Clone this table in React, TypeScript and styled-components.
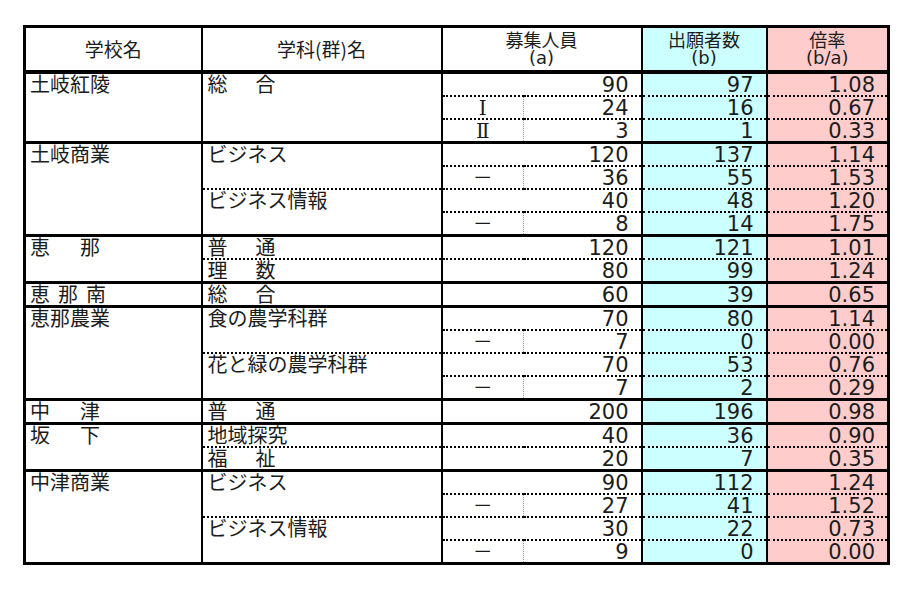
import React from 'react'
import styled, { createGlobalStyle } from 'styled-components'

const GlobalStyle = createGlobalStyle`
  body {
    margin: 0;
    background: #fff;
    font-family: "Noto Sans CJK JP", "Noto Sans", sans-serif;
    color: #1c1c1c;
  }
`

const Page = styled.div`
  padding: 25px 0 0 23px;
`

const Sheet = styled.table`
  border-collapse: collapse;
  table-layout: fixed;
  width: 864px;
  border: 3px solid #000;
`

const Col = styled.col<{ $w: number }>`
  width: ${(p) => p.$w}px;
`

const HeadCell = styled.th<{ $bg?: string }>`
  height: 42px;
  padding: 0;
  font-weight: normal;
  font-size: 19px;
  line-height: 20px;
  background: ${(p) => p.$bg || '#fff'};
  border: 2px solid #000;
  border-bottom: 4px solid #000;
  text-align: center;
  vertical-align: middle;
`

const HeadLine = styled.span`
  display: block;
  font-family: "DejaVu Sans", "Noto Sans CJK JP", sans-serif;
  font-size: 18px;
  line-height: 17px;
`

const Row = styled.tr<{ $first: boolean }>`
  td {
    border-top: ${(p) => (p.$first ? '3px solid #000' : 'none')};
  }
`

const SchoolCell = styled.td`
  padding: 0 0 0 4px;
  font-size: 20px;
  line-height: 20px;
  vertical-align: top;
  border-left: 2px solid #000;
  border-right: 2px solid #000;
`

const MajorCell = styled.td<{ $dotted: boolean }>`
  padding: 0 0 0 5px;
  font-size: 20px;
  line-height: 20px;
  vertical-align: top;
  border-right: 2px solid #000;
  border-bottom: ${(p) => (p.$dotted ? '2px dotted #000' : 'none')};
`

const LabelCell = styled.td<{ $mark: boolean }>`
  height: 21px;
  padding: 0;
  font-family: "DejaVu Serif", "Noto Sans CJK JP", serif;
  font-size: 20px;
  line-height: 20px;
  text-align: center;
  vertical-align: bottom;
  border-bottom: 2px dotted #000;
  border-right: ${(p) => (p.$mark ? '1px dotted #9a9a9a' : 'none')};
`

const NumCell = styled.td<{ $bg?: string }>`
  height: 21px;
  padding: 0 12px 0 0;
  font-family: "DejaVu Sans", "Noto Sans", sans-serif;
  font-size: 21px;
  line-height: 20px;
  text-align: right;
  vertical-align: bottom;
  background: ${(p) => p.$bg || '#fff'};
  border-bottom: 2px dotted #000;
  border-right: 2px solid #000;
`

const Spread = styled.span<{ $w: number }>`
  display: inline-flex;
  justify-content: space-between;
  width: ${(p) => p.$w}px;
`

type Line = { l?: string; a: number; b: number; r: string }
type Major = { name: string; spread?: number; rows: Line[] }
type School = { name: string; spread?: number; majors: Major[] }

const schools: School[] = [
  {
    name: '土岐紅陵',
    majors: [
      {
        name: '総合',
        spread: 68,
        rows: [
          { a: 90, b: 97, r: '1.08' },
          { l: 'Ⅰ', a: 24, b: 16, r: '0.67' },
          { l: 'Ⅱ', a: 3, b: 1, r: '0.33' },
        ],
      },
    ],
  },
  {
    name: '土岐商業',
    majors: [
      { name: 'ビジネス', rows: [{ a: 120, b: 137, r: '1.14' }, { l: '－', a: 36, b: 55, r: '1.53' }] },
      { name: 'ビジネス情報', rows: [{ a: 40, b: 48, r: '1.20' }, { l: '－', a: 8, b: 14, r: '1.75' }] },
    ],
  },
  {
    name: '恵那',
    spread: 70,
    majors: [
      { name: '普通', spread: 68, rows: [{ a: 120, b: 121, r: '1.01' }] },
      { name: '理数', spread: 68, rows: [{ a: 80, b: 99, r: '1.24' }] },
    ],
  },
  {
    name: '恵那南',
    spread: 76,
    majors: [{ name: '総合', spread: 68, rows: [{ a: 60, b: 39, r: '0.65' }] }],
  },
  {
    name: '恵那農業',
    majors: [
      { name: '食の農学科群', rows: [{ a: 70, b: 80, r: '1.14' }, { l: '－', a: 7, b: 0, r: '0.00' }] },
      { name: '花と緑の農学科群', rows: [{ a: 70, b: 53, r: '0.76' }, { l: '－', a: 7, b: 2, r: '0.29' }] },
    ],
  },
  {
    name: '中津',
    spread: 70,
    majors: [{ name: '普通', spread: 68, rows: [{ a: 200, b: 196, r: '0.98' }] }],
  },
  {
    name: '坂下',
    spread: 70,
    majors: [
      { name: '地域探究', rows: [{ a: 40, b: 36, r: '0.90' }] },
      { name: '福祉', spread: 68, rows: [{ a: 20, b: 7, r: '0.35' }] },
    ],
  },
  {
    name: '中津商業',
    majors: [
      { name: 'ビジネス', rows: [{ a: 90, b: 112, r: '1.24' }, { l: '－', a: 27, b: 41, r: '1.52' }] },
      { name: 'ビジネス情報', rows: [{ a: 30, b: 22, r: '0.73' }, { l: '－', a: 9, b: 0, r: '0.00' }] },
    ],
  },
]

const CYAN = '#ccffff'
const PINK = '#ffcccc'

const Name = ({ text, w }: { text: string; w?: number }) =>
  w ? (
    <Spread $w={w}>
      {text.split('').map((c, i) => (
        <span key={i}>{c}</span>
      ))}
    </Spread>
  ) : (
    <>{text}</>
  )

const App = () => {
  return (
    <Page>
      <GlobalStyle />
      <Sheet>
        <colgroup>
          <Col $w={177} />
          <Col $w={240} />
          <Col $w={82} />
          <Col $w={118} />
          <Col $w={125} />
          <Col $w={122} />
        </colgroup>
        <thead>
          <tr>
            <HeadCell>学校名</HeadCell>
            <HeadCell>学科(群)名</HeadCell>
            <HeadCell colSpan={2}>
              <HeadLine>募集人員</HeadLine>
              <HeadLine>(a)</HeadLine>
            </HeadCell>
            <HeadCell $bg={CYAN}>
              <HeadLine>出願者数</HeadLine>
              <HeadLine>(b)</HeadLine>
            </HeadCell>
            <HeadCell $bg={PINK}>
              <HeadLine>倍率</HeadLine>
              <HeadLine>(b/a)</HeadLine>
            </HeadCell>
          </tr>
        </thead>
        <tbody>
          {schools.map((s) => {
            const total = s.majors.reduce((n, m) => n + m.rows.length, 0)
            return s.majors.map((m, mi) =>
              m.rows.map((row, ri) => (
                <Row key={`${s.name}-${mi}-${ri}`} $first={mi === 0 && ri === 0}>
                  {mi === 0 && ri === 0 && (
                    <SchoolCell rowSpan={total}>
                      <Name text={s.name} w={s.spread} />
                    </SchoolCell>
                  )}
                  {ri === 0 && (
                    <MajorCell rowSpan={m.rows.length} $dotted={mi < s.majors.length - 1}>
                      <Name text={m.name} w={m.spread} />
                    </MajorCell>
                  )}
                  <LabelCell $mark={!!row.l}>{row.l}</LabelCell>
                  <NumCell>{row.a}</NumCell>
                  <NumCell $bg={CYAN}>{row.b}</NumCell>
                  <NumCell $bg={PINK}>{row.r}</NumCell>
                </Row>
              ))
            )
          })}
        </tbody>
      </Sheet>
    </Page>
  )
}

export default App
